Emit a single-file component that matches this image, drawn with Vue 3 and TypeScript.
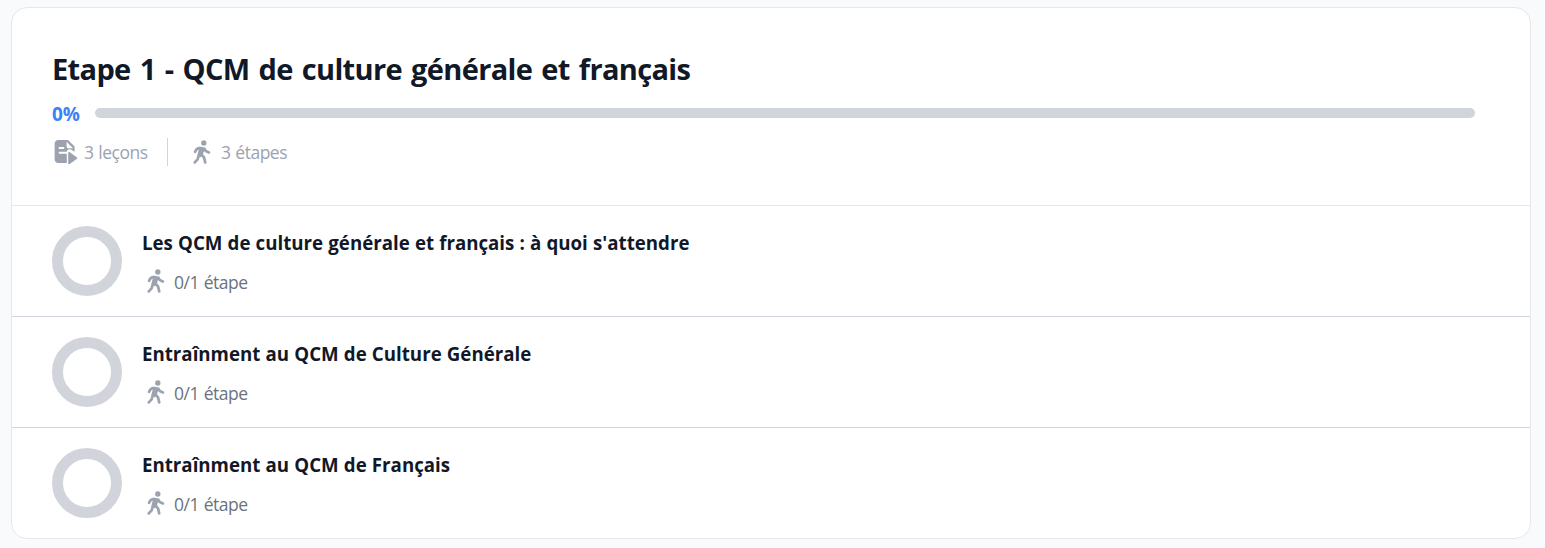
<script setup lang="ts">
interface Lesson {
  title: string
  steps: string
}

const lessons: Lesson[] = [
  { title: "Les QCM de culture générale et français : à quoi s'attendre", steps: '0/1 étape' },
  { title: 'Entraînment au QCM de Culture Générale', steps: '0/1 étape' },
  { title: 'Entraînment au QCM de Français', steps: '0/1 étape' },
]
</script>

<template>
  <main class="page">
    <svg class="defs" width="0" height="0" aria-hidden="true">
      <symbol id="walk" viewBox="0 0 18 24">
        <circle cx="10.800" cy="3" r="2.700" />
        <path
          fill="none"
          stroke="currentColor"
          stroke-width="2.700"
          stroke-linecap="round"
          stroke-linejoin="round"
          d="M2.100 11.800C2.800 9.500 4 8.500 6.300 8M11.300 8.600l1.500 2.500 3.100 1.300M8.400 14.300l2.700 3.300 1.100 4.800M5.700 15.600l-1.100 3.700-2.800 3.100"
        />
        <path d="M5.500 7C8.200 6.200 11.400 6.700 12.400 9.400L10.600 12l-.8 3.500-2.300 1.800-3.100-2.300 1.300-5.200z" />
      </symbol>
    </svg>
    <section class="card">
      <header class="head">
        <h2 class="title">Etape 1 - QCM de culture générale et français</h2>
        <div class="progress">
          <span class="percent">0%</span>
          <div class="track"></div>
        </div>
        <div class="meta">
          <svg class="file" viewBox="0 0 24 26" aria-hidden="true">
            <path
              fill-rule="evenodd"
              d="M4.400 1H14l6.600 6.600v5.200l-3.600-2.200c-2-1.200-4.200 0-4.200 2.200h-8v1.900h8V24H4.400C2.200 24 .6 22.400 .6 20.200V4.800C.6 2.600 2.200 1 4.400 1zM12.600 2.800v4.600c0 1.200.6 1.800 1.800 1.800h4.600zM4.800 8v1.900h5.400V8z"
            />
            <path d="M14.200 14c0-.8.8-1.200 1.500-.8l7 5c.7.500.7 1.200 0 1.700l-7 5.200c-.7.400-1.500 0-1.500-.8z" />
          </svg>
          <span class="lessons">3 leçons</span>
          <span class="divider"></span>
          <svg class="walk" aria-hidden="true"><use href="#walk" /></svg>
          <span class="steps">3 étapes</span>
        </div>
      </header>
      <article v-for="(lesson, i) in lessons" :key="i" class="row">
        <div class="ring"></div>
        <div class="info">
          <h3 class="name">{{ lesson.title }}</h3>
          <div class="sub">
            <svg class="walk" aria-hidden="true"><use href="#walk" /></svg>
            <span class="steps">{{ lesson.steps }}</span>
          </div>
        </div>
      </article>
    </section>
  </main>
</template>

<style>
body {
  background: #f9fafc;
}
</style>

<style scoped>
* {
  box-sizing: border-box;
}
.defs {
  position: absolute;
}
.page {
  height: 548px;
  padding: 7px 14px 9px 11px;
  overflow: hidden;
  background: #f9fafc;
  font-family: 'Open Sans', 'Noto Sans', sans-serif;
  color: #111827;
}
.card {
  height: 532px;
  border: 1px solid #e5e7eb;
  border-radius: 16px;
  background: #fff;
  overflow: hidden;
}
.head {
  height: 198px;
  padding: 42px 55px 0 40px;
  border-bottom: 1px solid #e5e7eb;
}
.title {
  margin: 0;
  font-size: 29px;
  font-weight: 700;
  line-height: 38px;
  letter-spacing: -0.65px;
  word-spacing: 2.2px;
  white-space: nowrap;
}
.progress {
  display: flex;
  align-items: center;
  height: 26px;
  margin-top: 13px;
}
.percent {
  width: 43px;
  font-size: 19px;
  font-weight: 700;
  color: #3b82f6;
  line-height: 26px;
}
.track {
  flex: 1;
  height: 10px;
  border-radius: 5px;
  background: #d1d5db;
  margin-top: -2px;
}
.meta {
  display: flex;
  align-items: center;
  height: 28px;
  margin-top: 11px;
  color: #9ca3af;
  line-height: 28px;
}
.file {
  width: 24px;
  height: 26px;
  margin-left: 2px;
  fill: #9ca3af;
}
.lessons {
  width: 83px;
  margin-left: 6px;
  white-space: nowrap;
}
.divider {
  width: 1px;
  height: 28px;
  background: #d1d5db;
}
.walk {
  width: 18px;
  height: 24px;
  color: #9ca3af;
  fill: #9ca3af;
}
.meta .walk {
  margin-left: 25px;
}
.meta .steps {
  margin-left: 10px;
}
.steps,
.lessons {
  font-weight: 370;
  font-size: 17.500px;
  letter-spacing: -0.500px;
  word-spacing: 0.800px;
}
.row {
  display: flex;
  height: 111px;
  padding: 20px 40px;
  border-bottom: 1px solid #d1d5db;
}
.row:last-child {
  border-bottom: 0;
}
.ring {
  flex: none;
  width: 70px;
  height: 70px;
  border: 11px solid #d1d5db;
  border-radius: 50%;
}
.info {
  margin-left: 20px;
}
.name {
  margin: 3px 0 0;
  font-size: 18.700px;
  font-weight: 700;
  line-height: 28px;
  white-space: nowrap;
  word-spacing: 0.300px;
}
.sub {
  display: flex;
  align-items: center;
  height: 28px;
  margin-top: 11px;
  padding-left: 5px;
  color: #6b7280;
}
.sub .walk {
  margin-top: -3px;
}
.sub .steps {
  margin-left: 9px;
  line-height: 28px;
}
</style>
